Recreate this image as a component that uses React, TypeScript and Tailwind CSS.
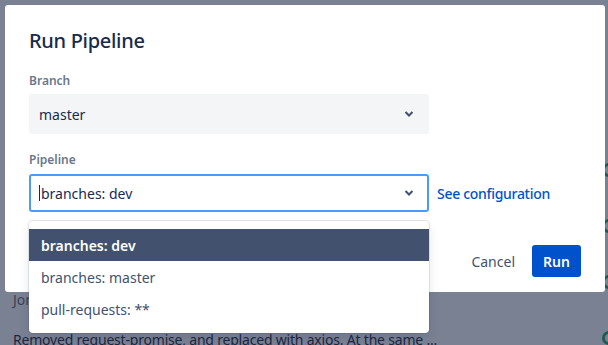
import React from "react";

function Chevron() {
  return (
    <svg width="10" height="8" viewBox="0 0 10 8" aria-hidden="true">
      <path d="M1.5 2l3.5 3.5L8.5 2" fill="none" stroke="#42526e" strokeWidth="2" />
    </svg>
  );
}

const options = ["branches: dev", "branches: master", "pull-requests: **"];

export default function App() {
  return (
    <div
      className="relative h-[345px] w-[608px] overflow-hidden bg-[#7a8193]"
      style={{ fontFamily: '"Noto Sans", "Open Sans", sans-serif' }}
    >
      {/* page behind the overlay */}
      <div className="flex h-full flex-col pl-[13px] pt-[290px]">
        <div className="text-[14px] leading-5 text-[#3b4256]">Jon</div>
        <div className="mt-[20px] text-[14px] leading-5 tracking-[-0.2px] text-[#1d2740]">
          Removed request-promise, and replaced with axios. At the same ...
        </div>
      </div>
      <div className="absolute right-[-8px] top-[163px] flex flex-col gap-[42px]">
        <div className="h-[14px] w-[14px] rounded-full border-[3px] border-[#1f5b50]" />
        <div className="h-[14px] w-[14px] rounded-full border-[3px] border-[#1f5b50]" />
        <div className="h-[14px] w-[14px] rounded-full border-[3px] border-[#1f5b50]" />
        <div className="h-[14px] w-[14px] rounded-full border-[3px] border-[#1f5b50]" />
      </div>

      {/* modal */}
      <div className="absolute left-[5px] top-[5px] h-[287px] w-[600px] rounded-[3px] bg-white px-6 pt-[24px]">
        <h1 className="text-[20px] font-medium leading-6 tracking-[-0.3px] text-[#172b4d]">Run Pipeline</h1>

        <div className="mt-[20px] text-[12px] font-semibold leading-4 text-[#6b778c]">Branch</div>
        <div className="mt-[5px] flex h-10 w-[400px] items-center justify-between rounded-[3px] bg-[#f4f5f7] pl-[10px] pr-[15px]">
          <span className="text-[14px] text-[#172b4d]">master</span>
          <Chevron />
        </div>

        <div className="mt-[18px] text-[12px] font-semibold leading-4 text-[#6b778c]">Pipeline</div>
        <div className="mt-[6px] flex items-center gap-2">
          <div className="flex h-[38px] w-[400px] items-center justify-between rounded-[3px] border-2 border-[#4c9aff] bg-white pl-[8px] pr-[13px]">
            <span className="flex items-center text-[14px] text-[#172b4d]">
              <span className="mr-[1px] h-[16px] w-px bg-[#172b4d]" />
              branches: dev
            </span>
            <Chevron />
          </div>
          <span className="text-[14px] font-medium tracking-[-0.3px] text-[#0052cc]">See configuration</span>
        </div>

        <div className="mt-[33px] flex items-center justify-end gap-[17px]">
          <span className="text-[14px] text-[#42526e]">Cancel</span>
          <button className="h-8 w-[49px] rounded-[3px] bg-[#0052cc] text-[14px] font-semibold text-white">
            Run
          </button>
        </div>
      </div>

      {/* dropdown menu */}
      <div className="absolute left-[29px] top-[221px] w-[400px] rounded-[4px] bg-white py-2 shadow-[0_0_0_1px_rgba(9,30,66,0.1),0_4px_11px_rgba(9,30,66,0.1)]">
        {options.map(function renderOption(option, index) {
          return (
            <div
              key={option}
              className={
                index === 0
                  ? "flex h-8 items-center bg-[#42526e] px-3 text-[14px] font-semibold text-white"
                  : "flex h-8 items-center px-3 text-[14px] text-[#42526e]"
              }
            >
              {option}
            </div>
          );
        })}
      </div>
    </div>
  );
}
